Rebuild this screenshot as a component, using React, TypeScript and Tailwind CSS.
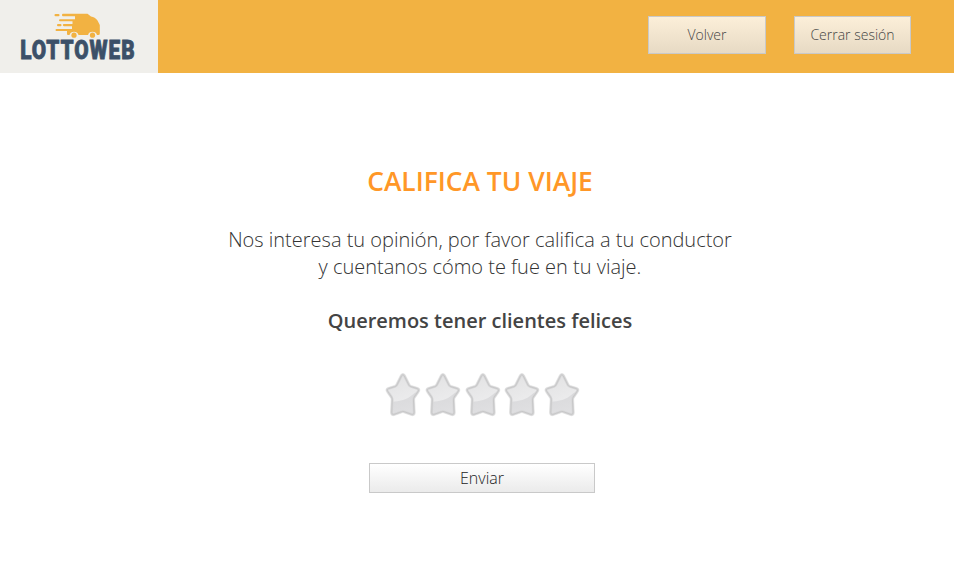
import React from "react";

function Logo() {
  return (
    <svg width="158" height="73" viewBox="0 0 158 73" className="block shrink-0 bg-[#f0efeb]" role="img">
      <g fill="#f2b242">
        <path d="M63 13.800H87.500L91 16.500Q95 17 97.500 20.500L99.800 25V33.500Q99.800 35 98.300 35H97Q96 31.700 92.500 31.700Q89 31.700 88 35H78.500Q77.500 31.700 74 31.700Q70.500 31.700 69.500 35H68Q67 35 67 34V31H56.500Q55.500 31 55.500 30T56.500 29H72V26.200H64Q62.800 26.200 62.800 25.100T64 24H72.500V21.200H60Q59 21.200 59 20.200T60 19.200H75V16.200H63Q62 16.200 62 15T63 13.800Z" />
        <rect x="54.500" y="13.900" width="5" height="2.300" rx="1" />
        <rect x="57" y="24" width="4.500" height="2.200" rx="1" />
        <circle cx="74" cy="35.200" r="2.600" />
        <circle cx="92.500" cy="35.200" r="2.600" />
      </g>
      <text
        transform="translate(20.200 58.900) scale(0.8 1)"
        textLength="143"
        lengthAdjust="spacing"
        fill="#3c5068"
        stroke="#3c5068"
        strokeWidth="0.800"
        className="font-['Roboto',sans-serif] text-[26px] font-black"
      >
        LOTTOWEB
      </text>
    </svg>
  );
}

const starPath =
  "M18.600 9.800Q20 7.300 21.400 9.800L26 19Q26.500 20.100 28 20.600L34.500 22.600Q36.800 23.500 35.200 25.500L31.400 31Q30.500 32.600 30.600 34L31.200 46.500Q31.200 49 29 48.500L21.200 45.700Q20 45.200 18.800 45.700L11 48.500Q8.800 49 8.800 46.500L9.400 34Q9.500 32.600 8.600 31L4.800 25.500Q3.200 23.500 5.500 22.600L12 20.600Q13.500 20.100 14 19Z";

function Star({ id }: { id: string }) {
  return (
    <svg viewBox="0 0 40 56" className="block h-[56px] w-[39.8px]">
      <defs>
        <linearGradient id={`fill-${id}`} x1="0" y1="0" x2="0.2" y2="1">
          <stop offset="0.4" stopColor="#d8d8da" />
          <stop offset="1" stopColor="#dfdfe1" />
        </linearGradient>
        <linearGradient id={`shine-${id}`} x1="0" y1="0" x2="0.4" y2="1">
          <stop offset="0" stopColor="#dededf" />
          <stop offset="1" stopColor="#ebebec" />
        </linearGradient>
        <clipPath id={`clip-${id}`}>
          <path d={starPath} />
        </clipPath>
      </defs>
      <path d={starPath} fill="none" stroke="#ececec" strokeWidth="3.500" />
      <path d={starPath} fill={`url(#fill-${id})`} />
      <path clipPath={`url(#clip-${id})`} d="M0 0H40V24Q33 25 28 30T7 36Z" fill={`url(#shine-${id})`} />
      <path d={starPath} fill="none" stroke="#d6d6d7" strokeWidth="2.400" />
      <path d={starPath} fill="none" stroke="#c8c8c9" strokeWidth="1" />
    </svg>
  );
}

function HeaderButton({ children, width }: { children: React.ReactNode; width: string }) {
  return (
    <button
      className={`${width} h-[38px] border border-[#c9c9c9] bg-linear-to-b from-[#fcefd9] to-[#e7dac4] pb-[2px] text-[14px] font-light text-[#444]`}
    >
      {children}
    </button>
  );
}

export default function App() {
  return (
    <div className="h-[585px] overflow-hidden bg-white font-['Open_Sans',sans-serif] text-[#333]">
      <header className="flex h-[73px] items-start bg-[#f2b242]">
        <Logo />
        <nav className="ml-auto mr-[43px] flex gap-[28px] pt-[16px]">
          <HeaderButton width="w-[118px]">Volver</HeaderButton>
          <HeaderButton width="w-[117px]">Cerrar sesión</HeaderButton>
        </nav>
      </header>
      <main className="flex flex-col items-center pl-[6px] pt-[90px] text-center">
        <h1 className="text-[26.4px] font-semibold leading-[36px] text-[#ff9727]">CALIFICA TU VIAJE</h1>
        <p className="mt-[27px] text-[20px] font-light leading-[27px]">
          Nos interesa tu opinión, por favor califica a tu conductor
          <br />y cuentanos cómo te fue en tu viaje.
        </p>
        <h2 className="mt-[27px] text-[20px] font-semibold leading-[27px] text-[#444]">Queremos tener clientes felices</h2>
        <div className="ml-[5px] mt-[32px] flex">
          {["1", "2", "3", "4", "5"].map((id) => (
            <Star key={id} id={id} />
          ))}
        </div>
        <button className="mr-[-4px] mt-[41px] h-[30px] w-[226px] border border-[#c9c9c9] bg-linear-to-b from-white to-[#ebebeb] text-[16px] font-light leading-[28px] text-[#222]">
          Enviar
        </button>
      </main>
    </div>
  );
}
